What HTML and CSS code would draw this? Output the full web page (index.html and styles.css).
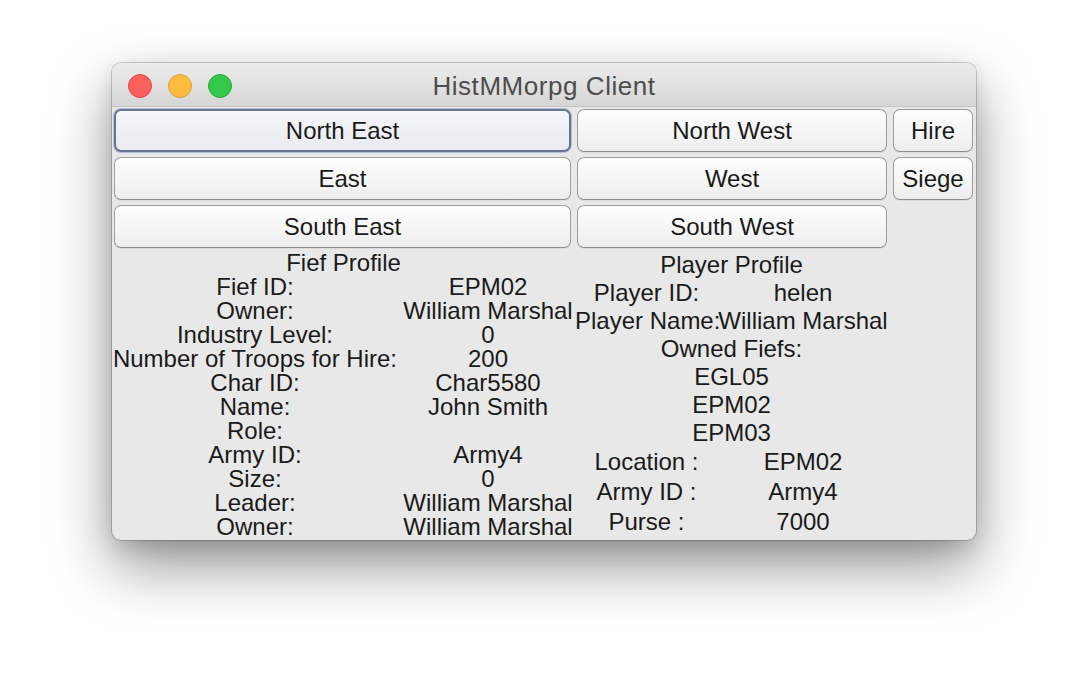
FILE: index.html
```html
<!DOCTYPE html>
<html>
<head>
<meta charset="utf-8">
<link rel="stylesheet" href="styles.css">
</head>
<body>
<div class="window">
  <div class="titlebar">
    <div class="lights">
      <span class="light red"></span>
      <span class="light yellow"></span>
      <span class="light green"></span>
    </div>
    <div class="title">HistMMorpg Client</div>
  </div>
  <div class="content">
    <div class="buttons">
      <button class="btn focused">North East</button>
      <button class="btn">North West</button>
      <button class="btn">Hire</button>
      <button class="btn">East</button>
      <button class="btn">West</button>
      <button class="btn">Siege</button>
      <button class="btn">South East</button>
      <button class="btn">South West</button>
    </div>
    <div class="profiles">
      <div class="fief">
        <div class="head">Fief Profile</div>
        <div class="grid-fief">
          <div>Fief ID:</div><div>EPM02</div>
          <div>Owner:</div><div>William Marshal</div>
          <div>Industry Level:</div><div>0</div>
          <div>Number of Troops for Hire:</div><div>200</div>
          <div>Char ID:</div><div>Char5580</div>
          <div>Name:</div><div>John Smith</div>
          <div>Role:</div><div></div>
          <div>Army ID:</div><div>Army4</div>
          <div>Size:</div><div>0</div>
          <div>Leader:</div><div>William Marshal</div>
          <div>Owner:</div><div>William Marshal</div>
        </div>
      </div>
      <div class="player">
        <div class="phead">Player Profile</div>
        <div class="grid-player">
          <div>Player ID:</div><div>helen</div>
          <div>Player Name:</div><div>William Marshal</div>
        </div>
        <div class="prow">Owned Fiefs:</div>
        <div class="prow">EGL05</div>
        <div class="prow">EPM02</div>
        <div class="prow">EPM03</div>
        <div class="grid-player tall">
          <div>Location :</div><div>EPM02</div>
          <div>Army ID :</div><div>Army4</div>
          <div>Purse :</div><div>7000</div>
        </div>
      </div>
    </div>
  </div>
</div>
</body>
</html>
```
FILE: styles.css
```css
* { box-sizing: border-box; }
html, body {
  margin: 0;
  background: #ffffff;
  min-height: 700px;
}
body {
  padding: 63px 0 0 112px;
  font-family: "Liberation Sans", Arial, sans-serif;
  color: #1a1a1a;
}
.window {
  width: 864px;
  height: 477px;
  background: #e8e8e8;
  border-radius: 9px;
  box-shadow: 0 0 0 1px rgba(0,0,0,0.18), 0 26px 60px rgba(0,0,0,0.42), 0 8px 20px rgba(0,0,0,0.12);
  overflow: hidden;
}
.titlebar {
  position: relative;
  height: 44px;
  background: linear-gradient(#ececec, #d6d6d6);
  border-bottom: 1px solid #c4c4c4;
  display: flex;
  align-items: center;
  justify-content: center;
}
.lights {
  position: absolute;
  left: 16px;
  top: 11px;
  display: flex;
  gap: 16px;
}
.light {
  width: 24px;
  height: 24px;
  border-radius: 50%;
  display: block;
}
.red { background: #fc605c; border: 1px solid #df4744; }
.yellow { background: #fdbc40; border: 1px solid #de9f34; }
.green { background: #34c84a; border: 1px solid #27a834; }
.title {
  font-size: 26px;
  color: #4d4d4d;
  letter-spacing: 0.55px;
  margin-top: 4px;
}
.content {
  padding: 2px 3px 0 2px;
}
.buttons {
  display: grid;
  grid-template-columns: 457px 310px 80px;
  grid-auto-rows: 43px;
  column-gap: 6px;
  row-gap: 5px;
}
.btn {
  font-family: "Liberation Sans", Arial, sans-serif;
  font-size: 24px;
  color: #1a1a1a;
  background: linear-gradient(#fdfdfd, #f6f6f6 50%, #ededed);
  border: 1px solid #9c9c9c;
  border-bottom-color: #8c8c8c;
  border-radius: 7px;
  padding: 0;
  margin: 0;
  box-shadow: 0 1px 0 rgba(0,0,0,0.05);
}
.btn.focused {
  border: 2px solid #68748f;
  background: linear-gradient(#f6f7fa, #eef0f5 50%, #e9ebf1);
  box-shadow: 0 0 0 1px #b3bed4;
}
.profiles {
  display: flex;
  margin: 3px 0 0 -2px;
  font-size: 24px;
  white-space: nowrap;
}
.fief {
  width: 463px;
  flex: none;
}
.head {
  height: 24px;
  line-height: 24px;
  text-align: center;
}
.grid-fief {
  display: grid;
  grid-template-columns: 286px 180px;
  grid-auto-rows: 24px;
  line-height: 24px;
  text-align: center;
}
.player {
  width: 313px;
  flex: none;
}
.phead, .prow {
  height: 28px;
  line-height: 28px;
  text-align: center;
}
.grid-player {
  display: grid;
  grid-template-columns: 143px 170px;
  grid-auto-rows: 28px;
  line-height: 28px;
  text-align: center;
}
.grid-player.tall {
  grid-auto-rows: 30px;
  line-height: 30px;
}
```
